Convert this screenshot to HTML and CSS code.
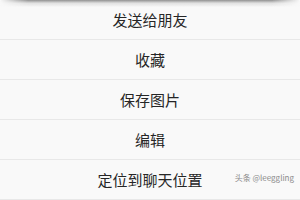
FILE: index.html
```html
<!DOCTYPE html>
<html lang="zh">
<head>
<meta charset="utf-8">
<link rel="stylesheet" href="styles.css">
</head>
<body>
<div class="sheet">
  <div class="shade"></div>
  <div class="row">发送给朋友</div>
  <div class="row">收藏</div>
  <div class="row">保存图片</div>
  <div class="row">编辑</div>
  <div class="row">定位到聊天位置</div>
  <div class="mark">头条 @leeggling</div>
</div>
</body>
</html>
```
FILE: styles.css
```css
html, body {
  margin: 0;
  padding: 0;
  background: #f9f9f9;
}
.sheet {
  position: relative;
  width: 300px;
  height: 200px;
  overflow: hidden;
  display: flex;
  flex-direction: column;
  font-family: "Noto Sans CJK SC", "Noto Sans", sans-serif;
  background: #f9f9f9;
}
.shade {
  position: absolute;
  left: 0;
  top: 0;
  width: 300px;
  height: 7px;
  background: linear-gradient(to bottom, rgba(110,110,110,0.75), rgba(180,180,180,0.35) 45%, rgba(249,249,249,0));
  -webkit-mask-image: linear-gradient(to right, transparent 0, #000 28px, #000 272px, transparent 300px);
  mask-image: linear-gradient(to right, transparent 0, #000 28px, #000 272px, transparent 300px);
}
.row {
  height: 40px;
  flex: none;
  box-sizing: border-box;
  border-bottom: 1px solid #e8e8e8;
  display: flex;
  align-items: center;
  justify-content: center;
  font-size: 15px;
  color: #262626;
}
.row:last-of-type {
  border-bottom: none;
}
.mark {
  position: absolute;
  right: 6px;
  bottom: 17px;
  font-size: 8px;
  color: #8a8a8a;
  line-height: 10px;
}
```
